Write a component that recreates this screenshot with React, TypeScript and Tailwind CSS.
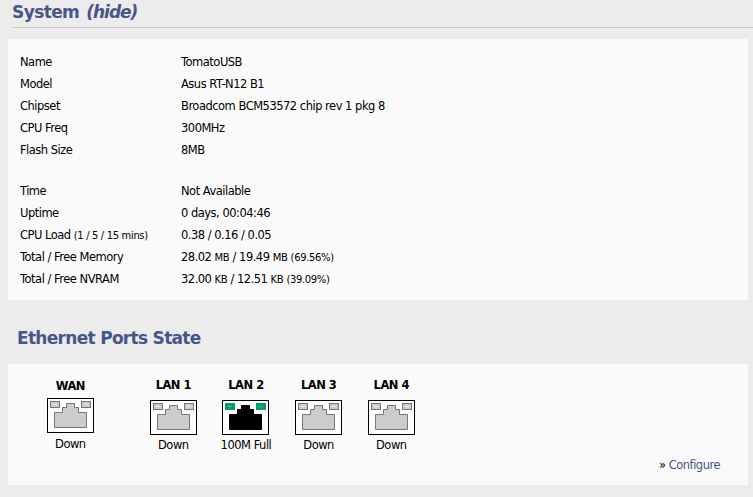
const FONT = "font-['DejaVu_Sans','Liberation_Sans',sans-serif]"

const sysRows: [React.ReactNode, React.ReactNode][] = [
  ['Name', 'TomatoUSB'],
  ['Model', 'Asus RT-N12 B1'],
  ['Chipset', 'Broadcom BCM53572 chip rev 1 pkg 8'],
  ['CPU Freq', '300MHz'],
  ['Flash Size', '8MB'],
]

const small = 'text-[10px] tracking-[-0.35px]'

const statusRows: [React.ReactNode, React.ReactNode][] = [
  ['Time', 'Not Available'],
  ['Uptime', '0 days, 00:04:46'],
  [
    <>CPU Load <span className={small}>(1 / 5 / 15 mins)</span></>,
    '0.38 / 0.16 / 0.05',
  ],
  [
    'Total / Free Memory',
    <>28.02 <span className={small}>MB</span> / 19.49 <span className={small}>MB</span> <span className={small}>(69.56%)</span></>,
  ],
  [
    'Total / Free NVRAM',
    <>32.00 <span className={small}>KB</span> / 12.51 <span className={small}>KB</span> <span className={small}>(39.09%)</span></>,
  ],
]

function InfoRows({ rows }: { rows: [React.ReactNode, React.ReactNode][] }) {
  return (
    <div className="flex flex-col">
      {rows.map(([label, value], i) => (
        <div key={i} className="grid h-[22px] grid-cols-[161px_1fr] items-center whitespace-nowrap">
          <div>{label}</div>
          <div>{value}</div>
        </div>
      ))}
    </div>
  )
}

function PortIcon({ active }: { active?: boolean }) {
  const led = active ? '#0a9a6a' : '#cccccc'
  const ledDot = active ? '#35c795' : '#eeeeee'
  return (
    <svg width="47" height="35" viewBox="0 0 47 35" className="block">
      <rect x="0.5" y="0.5" width="46" height="34" fill="#ffffff" stroke="#000000" />
      <rect x="3.5" y="3.5" width="9" height="6" fill={led} stroke={active ? '#0a9a6a' : '#777777'} />
      <rect x="34.5" y="3.5" width="9" height="6" fill={led} stroke={active ? '#0a9a6a' : '#777777'} />
      <rect x="6" y="6" width="4" height="1" fill={ledDot} />
      <rect x="37" y="6" width="4" height="1" fill={ledDot} />
      <path
        d="M7.5 29.5 V14.5 H15.5 V9.5 H19.5 V5.5 H27.5 V9.5 H31.5 V14.5 H39.5 V29.5 Z"
        fill={active ? '#000000' : '#cccccc'}
        stroke={active ? '#000000' : '#777777'}
      />
    </svg>
  )
}

function Port({ name, status, active, wan }: { name: string; status: string; active?: boolean; wan?: boolean }) {
  return (
    <div className={`flex w-[72.67px] flex-col items-center ${wan ? 'mt-px' : ''}`}>
      <div className="flex h-[19px] items-center font-bold leading-none text-black">{name}</div>
      <div className={wan ? 'mt-[2px]' : 'mt-[5px]'}>
        <PortIcon active={active} />
      </div>
      <div className={`flex h-[22px] items-center whitespace-nowrap ${wan ? 'mt-px' : ''}`}>{status}</div>
    </div>
  )
}

export default function App() {
  return (
    <div className={`${FONT} h-[497px] w-[753px] overflow-hidden bg-[#ececec] text-[11.5px] tracking-[-0.5px] text-black`}>
      <div className="ml-3 flex h-[28px] items-center border-b border-[#c8c8c8] pb-[3px] text-[17px] font-bold leading-none tracking-[-0.6px] text-[#47568a]">
        <span>System</span>
        <span className="ml-[7px] italic tracking-[-1px]">(hide)</span>
      </div>

      <div className="ml-2 mr-[5px] mt-[11px] flex h-[261px] flex-col gap-[19px] bg-[#fafafa] px-3 pb-[9px] pt-[13px]">
        <InfoRows rows={sysRows} />
        <InfoRows rows={statusRows} />
      </div>

      <div className="ml-[17px] mt-[27px] flex h-[23px] items-center text-[17px] font-bold leading-none tracking-[-0.7px] text-[#47568a]">
        Ethernet Ports State
      </div>

      <div className="ml-2 mr-[5px] mt-[14px] flex h-[121px] flex-col bg-[#fafafa] pt-[12px]">
        <div className="flex items-start pl-[26px]">
          <Port name="WAN" status="Down" wan />
          <div className="w-[30.33px]" />
          <Port name="LAN 1" status="Down" />
          <Port name="LAN 2" status="100M Full" active />
          <Port name="LAN 3" status="Down" />
          <Port name="LAN 4" status="Down" />
        </div>
        <div className="mr-[28px] text-right leading-[16px] text-[#47568a]">
          <span className="text-black">»</span> Configure
        </div>
      </div>
    </div>
  )
}
